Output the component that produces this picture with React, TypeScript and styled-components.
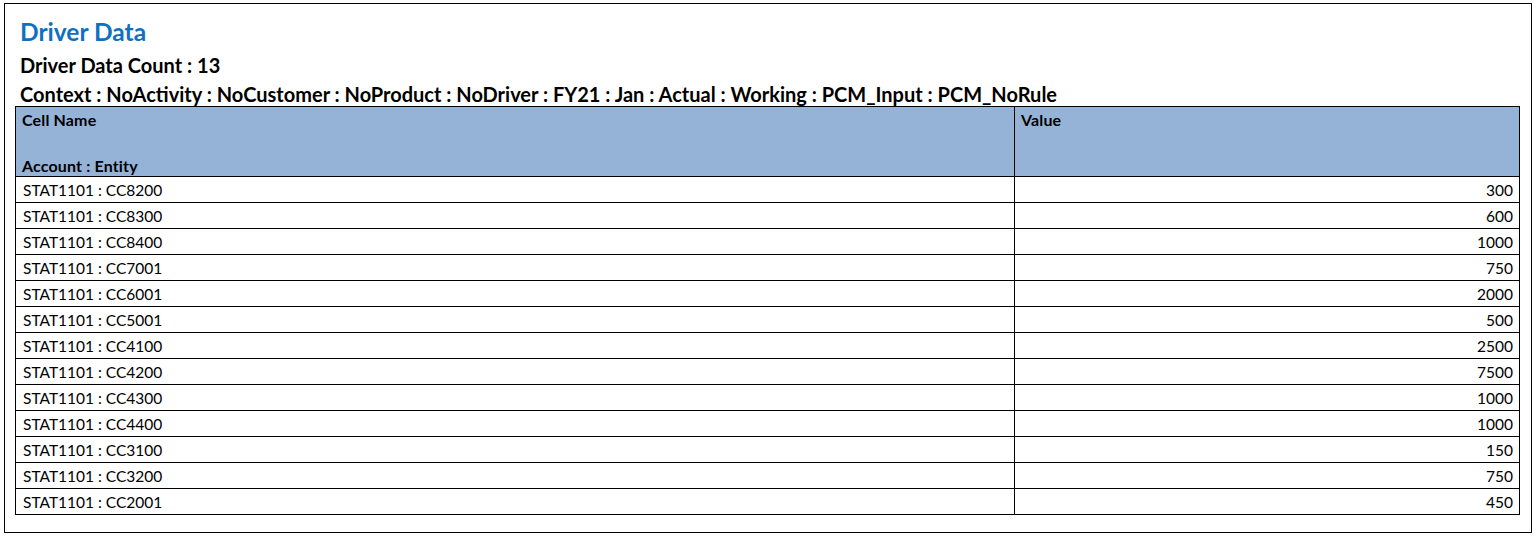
import React from "react";
import styled, { createGlobalStyle } from "styled-components";

const Global = createGlobalStyle`
  html, body { margin: 0; padding: 0; background: #ffffff; }
  body { font-family: Lato, "Open Sans", sans-serif; color: #000; }
`;

const Frame = styled.div`
  box-sizing: border-box;
  margin: 3px 0 0 4px;
  width: 1528px;
  height: 530px;
  border: 1px solid #000;
  padding: 12px 11px 0 10px;
`;

const Title = styled.h1`
  margin: 0 0 0 5px;
  font-size: 24.5px;
  line-height: 31px;
  font-weight: 700;
  color: #1070c0;
`;

const SubHeading = styled.div<{ $tight?: boolean }>`
  margin: ${(p) => (p.$tight ? "3px" : "4px")} 0 0 5px;
  font-size: 20px;
  line-height: ${(p) => (p.$tight ? "23px" : "29px")};
  font-weight: 700;
  white-space: nowrap;
`;

const Table = styled.table`
  width: 100%;
  border-collapse: collapse;
  table-layout: fixed;
  font-size: 15.5px;
`;

const HeadCell = styled.th`
  background: #95b3d7;
  border: 1px solid #000;
  padding: 5px 6px 0 6px;
  height: 70px;
  box-sizing: border-box;
  vertical-align: top;
  text-align: left;
  font-size: 16px;
  letter-spacing: 0.15px;
  font-weight: 700;
  line-height: 15px;
`;

const HeadLine = styled.div<{ $gap?: boolean }>`
  margin-top: ${(p) => (p.$gap ? "31px" : "0")};
`;

const Cell = styled.td<{ $right?: boolean }>`
  border: 1px solid #000;
  height: 26px;
  box-sizing: border-box;
  padding: 0 6px 0 7px;
  text-align: ${(p) => (p.$right ? "right" : "left")};
  vertical-align: middle;
  line-height: 18px;
`;

const rows: [string, number][] = [
  ["CC8200", 300],
  ["CC8300", 600],
  ["CC8400", 1000],
  ["CC7001", 750],
  ["CC6001", 2000],
  ["CC5001", 500],
  ["CC4100", 2500],
  ["CC4200", 7500],
  ["CC4300", 1000],
  ["CC4400", 1000],
  ["CC3100", 150],
  ["CC3200", 750],
  ["CC2001", 450],
];

export default function App() {
  return (
    <>
      <Global />
      <Frame>
        <Title>Driver Data</Title>
        <SubHeading>Driver Data Count : 13</SubHeading>
        <SubHeading $tight>
          Context : NoActivity : NoCustomer : NoProduct : NoDriver : FY21 : Jan : Actual : Working : PCM_Input : PCM_NoRule
        </SubHeading>
        <Table>
          <colgroup>
            <col style={{ width: "999px" }} />
            <col />
          </colgroup>
          <thead>
            <tr>
              <HeadCell>
                <HeadLine>Cell Name</HeadLine>
                <HeadLine $gap>Account : Entity</HeadLine>
              </HeadCell>
              <HeadCell>
                <HeadLine>Value</HeadLine>
              </HeadCell>
            </tr>
          </thead>
          <tbody>
            {rows.map(([cc, v]) => (
              <tr key={cc}>
                <Cell>STAT1101 : {cc}</Cell>
                <Cell $right>{v}</Cell>
              </tr>
            ))}
          </tbody>
        </Table>
      </Frame>
    </>
  );
}
